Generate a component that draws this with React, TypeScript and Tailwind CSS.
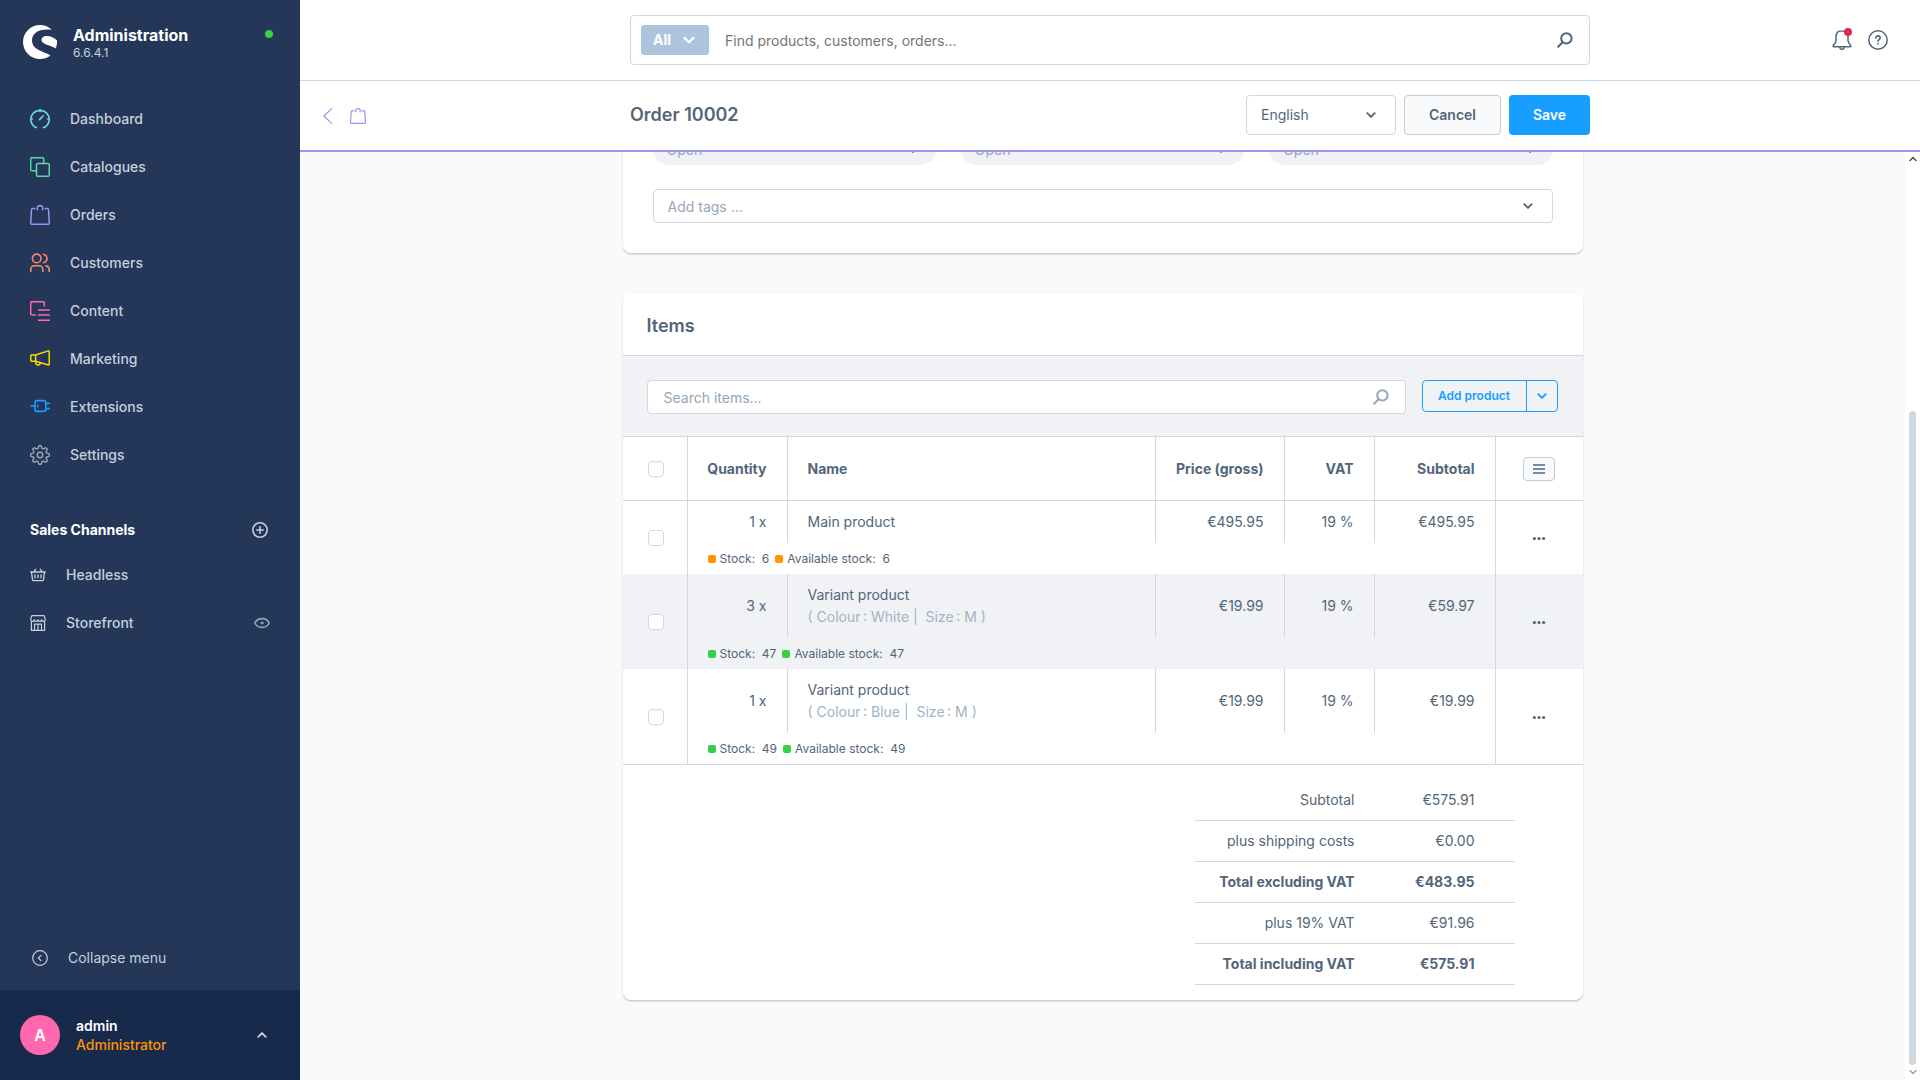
import React from 'react';
import { SiShopware } from 'react-icons/si';

type IconProps = { className?: string };

const line = {
  fill: 'none',
  stroke: 'currentColor',
  strokeLinecap: 'round' as const,
  strokeLinejoin: 'round' as const,
};

const DashboardIcon: React.FC<IconProps> = ({ className }) => (
  <svg viewBox="0 0 20 20" className={className} {...line} strokeWidth="1.6">
    <path d="M6.4 18.4H5.2A9.2 9.2 0 1 1 14.8 18.4H13.4" />
    <path d="M10 .8v1.8M.8 10h1.6M17.6 10h1.6M9.6 10.6l3.6-3.8" />
  </svg>
);

const CataloguesIcon: React.FC<IconProps> = ({ className }) => (
  <svg viewBox="0 0 20 20" className={className} {...line} strokeWidth="1.5">
    <path d="M6.5 13.7H2A1.3 1.3 0 0 1 .7 12.4V2A1.3 1.3 0 0 1 2 .7h10.4A1.3 1.3 0 0 1 13.7 2v4.5" />
    <rect x="6.5" y="6.5" width="12.8" height="12.8" rx="1.4" />
  </svg>
);

const BagIcon: React.FC<IconProps> = ({ className }) => (
  <svg viewBox="0 0 20 20" className={className} {...line} strokeWidth="1.5">
    <path d="M4.8 3.6H2.7a1.2 1.2 0 0 0-1.2 1.1L.7 18a1.2 1.2 0 0 0 1.2 1.3h16.2a1.2 1.2 0 0 0 1.2-1.3l-.8-13.3a1.2 1.2 0 0 0-1.2-1.1h-2.1" />
    <path d="M7.3 4.8V3a2.2 2.2 0 0 1 2.2-2.3h1A2.2 2.2 0 0 1 12.7 3v1.8" />
  </svg>
);

const CustomersIcon: React.FC<IconProps> = ({ className }) => (
  <svg viewBox="0 0 20 20" className={className} {...line} strokeWidth="1.6">
    <circle cx="6.7" cy="5.4" r="4.3" />
    <path d="M.8 18.6v-2.2a3.6 3.6 0 0 1 3.6-3.6h4.8a3.6 3.6 0 0 1 3.6 3.6v2.2" />
    <path d="M13.3 1.2c4.9 1.1 4.9 7.3.4 8.4M16 12.9c2.2.4 3.2 1.7 3.2 3.7v2" />
  </svg>
);

const ContentIcon: React.FC<IconProps> = ({ className }) => (
  <svg viewBox="0 0 20 20" className={className} {...line} strokeWidth="1.5">
    <path d="M5.2 14H2A1.3 1.3 0 0 1 .7 12.7V2A1.3 1.3 0 0 1 2 .7h11A1.3 1.3 0 0 1 14.3 2v3" />
    <path d="M8.6 9h10.7M8.6 14h10.7M8.6 19.2h10.7" />
  </svg>
);

const MarketingIcon: React.FC<IconProps> = ({ className }) => (
  <svg viewBox="0 0 20 20" className={className} {...line} strokeWidth="1.5">
    <path d="M5.6 6H1.5a.7.7 0 0 0-.7.7v4.8c0 .4.3.7.7.7h4.1zM5.6 6l12.7-4.1a.7.7 0 0 1 .9.7v12.7a.7.7 0 0 1-.9.7L5.6 12.2" />
    <path d="M5.6 12.6v1.2a2.4 2.4 0 0 0 4.7.5l.1-.6" />
  </svg>
);

const ExtensionsIcon: React.FC<IconProps> = ({ className }) => (
  <svg viewBox="0 0 20 20" className={className} {...line} strokeWidth="1.6">
    <rect x="5" y="3.6" width="10.8" height="10.8" rx="2.2" />
    <path d="M.8 9H5M15.8 6.4h3.4M15.8 11.6h3.4M7.8 8.3v1.4" />
  </svg>
);

// Eight rounded teeth, sampled around the circle
const gearPath = `M${Array.from({ length: 160 }, (_, i) => {
  const angle = (i / 160) * Math.PI * 2;
  const radius = 8.1 + 1.3 * Math.tanh(1.8 * Math.cos(8 * angle));
  return `${(10 + radius * Math.cos(angle)).toFixed(2)} ${(10 + radius * Math.sin(angle)).toFixed(2)}`;
}).join('L')}Z`;

const GearIcon: React.FC<IconProps> = ({ className }) => (
  <svg viewBox="0 0 20 20" className={className} {...line} strokeWidth="1.4">
    <path d={gearPath} />
    <circle cx="10" cy="10" r="2.7" />
  </svg>
);

const BasketIcon: React.FC<IconProps> = ({ className }) => (
  <svg viewBox="0 0 16 16" className={className} {...line} strokeWidth="1.3">
    <path d="M.7 5h14.6M1.5 5l1 7.6c.1.7.6 1.1 1.2 1.1h8.6c.6 0 1.1-.4 1.2-1.1l1-7.6M4 4.6l1.8-2.4M12 4.6l-1.8-2.4M5 7.8v3M8 7.8v3M11 7.8v3" />
  </svg>
);

const StoreIcon: React.FC<IconProps> = ({ className }) => (
  <svg viewBox="0 0 16 16" className={className} {...line} strokeWidth="1.2">
    <path d="M1.4 6.4v8.9h13.2V6.4M.7 4.4 1.8.7h12.4l1.1 3.7c0 2.7-3.7 2.7-3.7.3 0 2.3-3.6 2.3-3.6 0 0 2.3-3.6 2.3-3.6 0 0 2.4-3.7 2.4-3.7-.3zM4.5 15.3V9.2h7v6.1M8 9.2v6.1" />
  </svg>
);

const EyeIcon: React.FC<IconProps> = ({ className }) => (
  <svg viewBox="0 0 16 16" className={className} {...line} strokeWidth="1.6">
    <path d="M.8 8C3.6 2.2 12.4 2.2 15.2 8 12.4 13.8 3.6 13.8.8 8z" />
    <circle cx="8" cy="8" r="1" fill="currentColor" strokeWidth="1" />
  </svg>
);

const PlusCircleIcon: React.FC<IconProps> = ({ className }) => (
  <svg viewBox="0 0 16 16" className={className} {...line} strokeWidth="1.6">
    <circle cx="8" cy="8" r="7.2" />
    <path d="M8 4.8v6.4M4.8 8h6.4" />
  </svg>
);

const CollapseIcon: React.FC<IconProps> = ({ className }) => (
  <svg viewBox="0 0 16 16" className={className} {...line} strokeWidth="1.2">
    <circle cx="8" cy="8" r="7.3" />
    <path d="M9 5.3 6.3 8 9 10.7" />
  </svg>
);

const SearchIcon: React.FC<IconProps> = ({ className }) => (
  <svg viewBox="0 0 16 16" className={className} {...line} strokeWidth="2">
    <circle cx="9.4" cy="6.4" r="5.2" />
    <path d="M5.600 10.300 1.200 14.700" />
  </svg>
);

const BellIcon: React.FC<IconProps> = ({ className }) => (
  <svg viewBox="0 0 20 20" className={className} {...line} strokeWidth="1.5">
    <path d="M10 .8C6 .8 4 3.6 4 7v3.6c0 1.8-.8 2.8-2.3 4.5-.9 1-.7 1.7.3 1.7h16c1 0 1.2-.7.3-1.7-1.5-1.7-2.3-2.7-2.3-4.5V7c0-3.4-2-6.2-6-6.2z" />
    <path d="M7.8 17.2c.2 2.8 4.2 2.8 4.4 0" />
  </svg>
);

const HelpIcon: React.FC<IconProps> = ({ className }) => (
  <svg viewBox="0 0 20 20" className={className} {...line} strokeWidth="1.5">
    <circle cx="10" cy="10" r="9.2" />
    <path d="M7.9 7.9c0-2.7 4.2-2.7 4.2 0 0 1.6-2.1 1.7-2.1 3.2M10 13.7v.1" strokeWidth="1.7" />
  </svg>
);

const ChevronIcon: React.FC<IconProps> = ({ className }) => (
  <svg viewBox="0 0 10 10" className={className} {...line} strokeWidth="1.9">
    <path d="M1.3 3.2 5 6.9l3.7-3.7" />
  </svg>
);

const navItems = [
  { label: 'Dashboard', icon: DashboardIcon, color: 'text-[#6ed5ec]' },
  { label: 'Catalogues', icon: CataloguesIcon, color: 'text-[#57d9a3]' },
  { label: 'Orders', icon: BagIcon, color: 'text-[#a092f0]' },
  { label: 'Customers', icon: CustomersIcon, color: 'text-[#f88962]' },
  { label: 'Content', icon: ContentIcon, color: 'text-[#ff68ac]' },
  { label: 'Marketing', icon: MarketingIcon, color: 'text-[#ffd700]' },
  { label: 'Extensions', icon: ExtensionsIcon, color: 'text-[#189eff]' },
  { label: 'Settings', icon: GearIcon, color: 'text-[#9aa8b5]' },
];

const orderItems = [
  { id: 1, quantity: 1, name: 'Main product', colour: null, price: '€495.95', subtotal: '€495.95', stock: 6 },
  { id: 2, quantity: 3, name: 'Variant product', colour: 'White', price: '€19.99', subtotal: '€59.97', stock: 47 },
  { id: 3, quantity: 1, name: 'Variant product', colour: 'Blue', price: '€19.99', subtotal: '€19.99', stock: 49 },
];

const totals = [
  { label: 'Subtotal', value: '€575.91', strong: false },
  { label: 'plus shipping costs', value: '€0.00', strong: false },
  { label: 'Total excluding VAT', value: '€483.95', strong: true },
  { label: 'plus 19% VAT', value: '€91.96', strong: false },
  { label: 'Total including VAT', value: '€575.91', strong: true },
];

const checkboxClass =
  'block h-4 w-4 appearance-none rounded border border-[#d1d9e0] bg-white checked:bg-[#189eff]';

const cardClass =
  'w-[960px] max-w-full shrink-0 overflow-hidden rounded-lg bg-white shadow-[0_1px_1px_rgba(0,0,0,0.08),0_2px_1px_rgba(0,0,0,0.06),0_1px_3px_rgba(0,0,0,0.1)]';

const Sidebar: React.FC = () => (
  <aside className="flex w-[300px] shrink-0 flex-col bg-[#243758] text-[#c3d0de]">
    <header className="flex items-start pt-6 pr-[27px] pl-[23px]">
      <SiShopware className="mt-px h-[34px] w-[34px] text-white" />
      <div className="ml-4 flex-1">
        <p className="text-base leading-[22px] font-bold text-white">Administration</p>
        <p className="text-xs leading-[14px]">6.6.4.1</p>
      </div>
      <span className="mt-1.5 h-2 w-2 rounded-full bg-[#37d046]" />
    </header>

    <nav className="mt-[35px]">
      <ul>
        {navItems.map(({ label, icon: Icon, color }) => (
          <li key={label}>
            <a href="#" className="flex h-12 items-center gap-5 pl-[30px] text-sm font-medium">
              <Icon className={`h-5 w-5 ${color}`} />
              {label}
            </a>
          </li>
        ))}
      </ul>
    </nav>

    <section className="mt-[30px]">
      <div className="flex h-[42px] items-center justify-between pr-8 pl-[30px]">
        <h2 className="text-sm font-bold text-white">Sales Channels</h2>
        <button type="button" aria-label="Add sales channel">
          <PlusCircleIcon className="h-4 w-4" />
        </button>
      </div>
      <a href="#" className="flex h-12 items-center gap-5 pl-[30px] text-sm font-medium">
        <BasketIcon className="h-4 w-4" />
        Headless
      </a>
      <div className="flex h-12 items-center justify-between pr-[30px] pl-[30px]">
        <a href="#" className="flex items-center gap-5 text-sm font-medium">
          <StoreIcon className="h-4 w-4" />
          Storefront
        </a>
        <button type="button" aria-label="Open storefront" className="text-[#94a6b8]">
          <EyeIcon className="h-4 w-4" />
        </button>
      </div>
    </section>

    <button type="button" className="mt-auto flex h-16 items-center gap-5 pl-8 text-sm">
      <CollapseIcon className="h-4 w-4" />
      Collapse menu
    </button>
    <button type="button" className="flex h-[90px] items-center bg-[#182a4c] pr-[33px] pl-5 text-left">
      <span className="flex h-10 w-10 items-center justify-center rounded-full bg-[#ff68ac] text-base font-semibold text-white">
        A
      </span>
      <span className="ml-4 flex-1 text-sm leading-[19px]">
        <span className="block font-semibold text-white">admin</span>
        <span className="block font-medium text-[#ff9500]">Administrator</span>
      </span>
      <ChevronIcon className="h-2.5 w-2.5 rotate-180" />
    </button>
  </aside>
);

const TopBar: React.FC = () => (
  <div className="grid h-[81px] shrink-0 grid-cols-[1fr_960px_1fr] items-center border-b border-[#d1d9e0] bg-white">
    <form className="col-start-2 flex h-[50px] items-center rounded border border-[#d1d9e0] pr-4 pl-2.5">
      <button
        type="button"
        className="flex h-[30px] w-[68px] items-center justify-between rounded-[3px] bg-[#aec4dd] pr-3.5 pl-3 text-sm font-bold text-white"
      >
        All
        <ChevronIcon className="h-3 w-3" />
      </button>
      <input
        type="search"
        aria-label="Find products, customers, orders"
        placeholder="Find products, customers, orders..."
        className="ml-4 flex-1 pt-0.5 text-sm outline-none placeholder:text-[#757575]"
      />
      <button type="submit" aria-label="Search" className="text-[#52667a]">
        <SearchIcon className="h-4 w-4" />
      </button>
    </form>
    <div className="flex items-center justify-end gap-4 pr-8 text-[#52667a]">
      <button type="button" aria-label="Notifications" className="relative">
        <BellIcon className="h-5 w-5" />
        <span className="absolute -top-0.5 right-0 h-2 w-2 rounded-full bg-[#de294c]" />
      </button>
      <button type="button" aria-label="Help">
        <HelpIcon className="h-5 w-5" />
      </button>
    </div>
  </div>
);

const SmartBar: React.FC = () => (
  <div className="grid h-[71px] shrink-0 grid-cols-[1fr_960px_1fr] border-b-2 border-[#a092f0] bg-white py-3.5">
    <div className="flex items-center gap-3.5 pl-5 text-[#a092f0]">
      <a href="#" aria-label="Back">
        <svg viewBox="0 0 16 16" className="h-4 w-4" {...line} strokeWidth="1.2">
          <path d="M11.6.6 4 8l7.600 7.400" />
        </svg>
      </a>
      <BagIcon className="h-4 w-4" />
    </div>
    <div className="flex h-10 items-center">
      <h1 className="flex-1 text-lg font-semibold">Order 10002</h1>
      <div className="grid w-[150px] items-center">
        <select
          aria-label="Language"
          className="col-start-1 row-start-1 h-10 appearance-none rounded border border-[#d1d9e0] bg-white pl-3.5 text-sm"
        >
          <option>English</option>
        </select>
        <ChevronIcon className="pointer-events-none col-start-1 row-start-1 mr-5 h-2.5 w-2.5 justify-self-end" />
      </div>
      <button
        type="button"
        className="ml-2 h-10 w-[97px] rounded border border-[#c2ccd6] bg-[#f9fafb] text-sm font-semibold"
      >
        Cancel
      </button>
      <button type="button" className="ml-2 h-10 w-[81px] rounded bg-[#189eff] text-sm font-semibold text-white">
        Save
      </button>
    </div>
  </div>
);

const StatusCard: React.FC = () => (
  <section className={`${cardClass} p-[30px]`}>
    <div className="grid grid-cols-3 gap-[25px]">
      {['Payment status', 'Delivery status', 'Order status'].map((status) => (
        <div key={status} className="grid items-center">
          <select
            aria-label={status}
            className="col-start-1 row-start-1 h-[30px] appearance-none rounded-full bg-[#f0f2f5] pl-3.5 text-sm text-[#94a6b8]"
          >
            <option>Open</option>
          </select>
          <ChevronIcon className="pointer-events-none col-start-1 row-start-1 mr-[18px] h-2.5 w-2.5 justify-self-end" />
        </div>
      ))}
    </div>
    <div className="mt-6 flex h-[34px] items-center rounded border border-[#d1d9e0] pr-[19px] pl-3.5">
      <input
        type="text"
        aria-label="Tags"
        placeholder="Add tags ..."
        className="flex-1 pt-0.5 text-sm outline-none placeholder:text-[#94a6b8]"
      />
      <ChevronIcon className="h-2.5 w-2.5" />
    </div>
  </section>
);

const ItemsTable: React.FC = () => (
  <table className="w-full table-fixed border-separate border-spacing-0 text-sm">
    <colgroup>
      <col className="w-[65px]" />
      <col className="w-[100px]" />
      <col />
      <col className="w-[129px]" />
      <col className="w-[90px]" />
      <col className="w-[121px]" />
      <col className="w-[87px]" />
    </colgroup>
    <thead>
      <tr className="h-16 [&>th]:border-b [&>th]:border-[#d1d9e0] [&>th:not(:last-child)]:border-r">
        <th className="pl-[25px]">
          <input type="checkbox" aria-label="Select all items" className={checkboxClass} />
        </th>
        <th className="pr-5 text-right font-bold">Quantity</th>
        <th className="pl-5 text-left font-bold">Name</th>
        <th className="pr-5 text-right font-bold">Price (gross)</th>
        <th className="pr-5 text-right font-bold">VAT</th>
        <th className="pr-5 text-right font-bold">Subtotal</th>
        <th>
          <button
            type="button"
            aria-label="List settings"
            className="mx-auto flex h-6 w-8 items-center justify-center rounded border border-[#c2ccd6] bg-[#f9fafb] text-[#758ca3]"
          >
            <svg viewBox="0 0 12 12" className="h-3 w-3" fill="none" stroke="currentColor" strokeWidth="2">
              <path d="M0 2h12M0 6h12M0 10h12" />
            </svg>
          </button>
        </th>
      </tr>
    </thead>
    {orderItems.map((item, index) => {
      const dot = item.stock > 10 ? 'bg-[#37d046]' : 'bg-[#ff9500]';
      return (
        <tbody key={item.id} className={index % 2 ? 'bg-[#f0f2f5]' : 'bg-white'}>
          <tr className="[&>td]:border-[#d1d9e0] [&>td:not(:last-child)]:border-r">
            <td rowSpan={2} className="pl-[25px]">
              <input type="checkbox" aria-label={`Select ${item.name}`} className={checkboxClass} />
            </td>
            <td className="pr-5 text-right">{item.quantity} x</td>
            <td className="py-2.5 pl-5 leading-[22px]">
              {item.name}
              {item.colour && (
                <div className="text-[#a3b3c4]">
                  ( Colour&thinsp;: {item.colour} |&nbsp; Size&thinsp;: M )
                </div>
              )}
            </td>
            <td className="pr-5 text-right">{item.price}</td>
            <td className="pr-5 text-right">19 %</td>
            <td className="pr-5 text-right">{item.subtotal}</td>
            <td rowSpan={2}>
              <button type="button" aria-label="Item actions" className="mx-auto block">
                <svg viewBox="0 0 16 16" className="h-4 w-4" fill="currentColor">
                  <circle cx="3.4" cy="8.5" r="1.6" />
                  <circle cx="8" cy="8.5" r="1.6" />
                  <circle cx="12.6" cy="8.5" r="1.6" />
                </svg>
              </button>
            </td>
          </tr>
          <tr className="h-[31px]">
            <td colSpan={5} className="border-r border-[#d1d9e0] pl-5">
              <div className="flex items-center text-xs">
                <span className={`mr-1 h-2 w-2 rounded-[2px] ${dot}`} />
                Stock: &nbsp;{item.stock}
                <span className={`mr-1 ml-1.5 h-2 w-2 rounded-[2px] ${dot}`} />
                Available stock: &nbsp;{item.stock}
              </div>
            </td>
          </tr>
        </tbody>
      );
    })}
  </table>
);

const ItemsCard: React.FC = () => (
  <section className={cardClass}>
    <h2 className="flex h-[62px] items-center px-6 pt-1 text-lg font-semibold">Items</h2>
    <div className="flex h-[82px] items-start border-y border-[#d1d9e0] bg-[#f0f2f5] pt-6 pr-[25px] pl-6">
      <div className="flex h-[34px] flex-1 items-center rounded border border-[#d1d9e0] bg-white px-4">
        <input
          type="search"
          aria-label="Search items"
          placeholder="Search items..."
          className="flex-1 pt-0.5 text-sm outline-none placeholder:text-[#94a6b8]"
        />
        <SearchIcon className="h-4 w-4 text-[#94a6b8]" />
      </div>
      <div className="ml-4 flex h-8 rounded border border-[#189eff] text-[#189eff]">
        <button type="button" className="w-[103px] text-xs font-semibold">
          Add product
        </button>
        <button
          type="button"
          aria-label="More ways to add"
          className="flex w-[31px] items-center justify-center border-l border-[#189eff]"
        >
          <ChevronIcon className="h-2.5 w-2.5" />
        </button>
      </div>
    </div>
    <ItemsTable />
    <div className="flex justify-end border-t border-[#d1d9e0] py-[15px] pr-[68px]">
      <dl className="w-80 text-sm">
        {totals.map((total) => (
          <div
            key={total.label}
            className={`grid h-[41px] grid-cols-2 items-center border-b border-[#d1d9e0] text-right ${
              total.strong ? 'font-bold' : ''
            }`}
          >
            <dt>{total.label}</dt>
            <dd className="pr-10">{total.value}</dd>
          </div>
        ))}
      </dl>
    </div>
  </section>
);

const App: React.FC = () => (
  <div className="flex h-screen overflow-hidden bg-[#f9fafb] font-['Inter',sans-serif] text-[#52667a]">
    <Sidebar />
    <div className="flex min-w-0 flex-1 flex-col">
      <TopBar />
      <SmartBar />
      <div className="flex min-h-0 flex-1">
        {/* Scrolled to the end, so the cards hang from the bottom edge */}
        <main className="flex min-w-0 flex-1 flex-col items-center justify-end gap-10 overflow-hidden pb-20">
          <StatusCard />
          <ItemsCard />
        </main>
        <div className="flex w-[15px] flex-col items-center bg-white pt-[3px] pb-1">
          <ChevronIcon className="h-2 w-2 rotate-180 text-[#505050]" />
          <div className="mt-auto mb-[3px] h-[71%] w-[7px] rounded-full bg-[#d1d9e0]" />
          <ChevronIcon className="h-2 w-2 text-[#a3a3a3]" />
        </div>
      </div>
    </div>
  </div>
);

export default App;
